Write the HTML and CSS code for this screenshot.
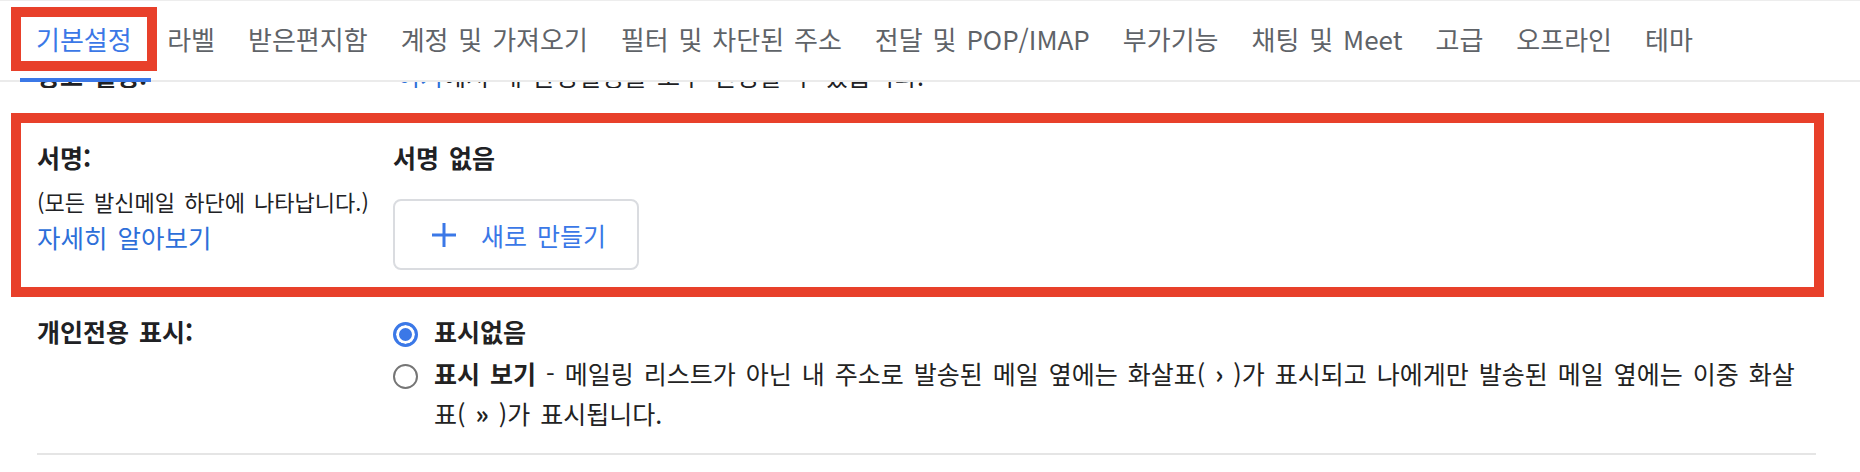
FILE: index.html
```html
<!DOCTYPE html>
<html lang="ko">
<head>
<meta charset="utf-8">
<title>설정</title>
<link rel="stylesheet" href="styles.css">
</head>
<body>
<header class="tabbar">
  <nav class="tabs">
    <a class="tab active">기본설정</a>
    <a class="tab">라벨</a>
    <a class="tab">받은편지함</a>
    <a class="tab">계정 및 가져오기</a>
    <a class="tab">필터 및 차단된 주소</a>
    <a class="tab">전달 및 POP/IMAP</a>
    <a class="tab">부가기능</a>
    <a class="tab">채팅 및 Meet</a>
    <a class="tab">고급</a>
    <a class="tab">오프라인</a>
    <a class="tab">테마</a>
  </nav>
</header>
<main class="settings">
  <div class="clip">
    <div class="row">
      <div class="label">광고 설정:</div>
      <div class="value"><a class="link">여기</a>에서 내 환경설정을 모두 변경할 수 있습니다.</div>
    </div>
  </div>

  <section class="row highlight">
    <div class="label-col">
      <div class="label">서명:</div>
      <div class="desc">(모든 발신메일 하단에 나타납니다.)</div>
      <a class="link learn">자세히 알아보기</a>
    </div>
    <div class="value-col">
      <div class="label">서명 없음</div>
      <button class="new-btn" type="button">
        <svg class="plus" width="26" height="26" viewBox="0 0 26 26"><path d="M13 1v24M1 13h24" stroke="#3b78e7" stroke-width="3" fill="none"/></svg>
        <span>새로 만들기</span>
      </button>
    </div>
  </section>

  <section class="row personal">
    <div class="label plabel">개인전용 표시:</div>
    <div class="radios">
      <div class="opt">
        <span class="radio checked"></span>
        <div class="opt-text"><b>표시없음</b></div>
      </div>
      <div class="opt">
        <span class="radio"></span>
        <div class="opt-text"><b>표시 보기</b> - 메일링 리스트가 아닌 내 주소로 발송된 메일 옆에는 화살표( <b>›</b> )가 표시되고 나에게만 발송된 메일 옆에는 이중 화살표( <b>»</b> )가 표시됩니다.</div>
      </div>
    </div>
  </section>
  <hr class="sep">
</main>
</body>
</html>
```
FILE: styles.css
```css
html, body {
  margin: 0;
  padding: 0;
  background: #fff;
}
body {
  font-family: "Noto Sans CJK KR", "Noto Sans", sans-serif;
  color: #202124;
  font-size: 25px;
  word-spacing: 0.12em;
  overflow: hidden;
}

.tabbar {
  border-top: 1px solid #ededed;
  border-bottom: 2px solid #ebebeb;
  height: 79px;
}
.tabs {
  display: flex;
  padding-left: 20px;
}
.tab {
  position: relative;
  display: block;
  height: 76px;
  line-height: 76px;
  padding: 0 16.5px 5px;
  margin-bottom: -2px;
  font-size: 26px;
  word-spacing: 0.1em;
  color: #5f6368;
  white-space: nowrap;
}
.tab.active {
  color: #3b78e7;
  padding-left: 16px;
  padding-right: 19px;
  box-shadow: inset 0 -4px 0 #3b78e7;
}
.tab.active::after {
  content: "";
  position: absolute;
  left: -9px;
  right: -6px;
  top: 6px;
  bottom: 11px;
  border: 10px solid #e8402a;
}

.settings {
  padding: 0 44px 0 37px;
}
.row {
  display: grid;
  grid-template-columns: 356px 1fr;
}
.clip {
  height: 6px;
  overflow: hidden;
  display: flex;
  align-items: flex-end;
}
.clip .row {
  width: 100%;
  line-height: 25px;
}
.clip .label { font-weight: 700; line-height: 25px; }
.clip .value { padding-left: 4px; }

.label {
  font-weight: 700;
  line-height: 36px;
}
.link {
  color: #2d6fd9;
  font-weight: 400;
}

.highlight {
  margin: 25px -8px 0 -26px;
  border: 10px solid #e8402a;
  padding: 16px 0 17px 16px;
  grid-template-columns: 356px 1fr;
}
.label-col {
  display: flex;
  flex-direction: column;
  align-items: flex-start;
}
.desc {
  font-size: 22px;
  line-height: 30px;
  margin-top: 11px;
}
.learn {
  display: block;
  font-size: 25.5px;
  line-height: 36px;
  margin-top: 3px;
}
.value-col {
  display: flex;
  flex-direction: column;
  align-items: flex-start;
}
.new-btn {
  margin-top: 24px;
  width: 246px;
  height: 71px;
  border: 2px solid #dadce0;
  border-radius: 8px;
  background: #fff;
  display: flex;
  align-items: center;
  padding: 0 0 0 36px;
  font-family: inherit;
  font-size: 25px;
  word-spacing: 0.12em;
  color: #3b78e7;
  gap: 24px;
}
.plus { display: block; flex: none; }

.personal {
  margin-top: 14px;
}
.plabel { line-height: 40px; }
.radios {
  display: flex;
  flex-direction: column;
  gap: 2px;
}
.opt {
  display: grid;
  grid-template-columns: 25px 1fr;
  column-gap: 16px;
  align-items: start;
}
.opt-text {
  line-height: 40px;
  color: #222;
}
.opt-text b { font-weight: 700; }
.radio {
  box-sizing: border-box;
  width: 25px;
  height: 25px;
  margin-top: 11px;
  border-radius: 50%;
  border: 2px solid #757575;
  background: #fff;
}
.radio.checked {
  border: 3px solid #3b78e7;
  background: #3b78e7;
  box-shadow: inset 0 0 0 3px #fff;
}

.sep {
  margin: 20px 0 0;
  border: 0;
  height: 2px;
  background: #e5e5e5;
}
```
